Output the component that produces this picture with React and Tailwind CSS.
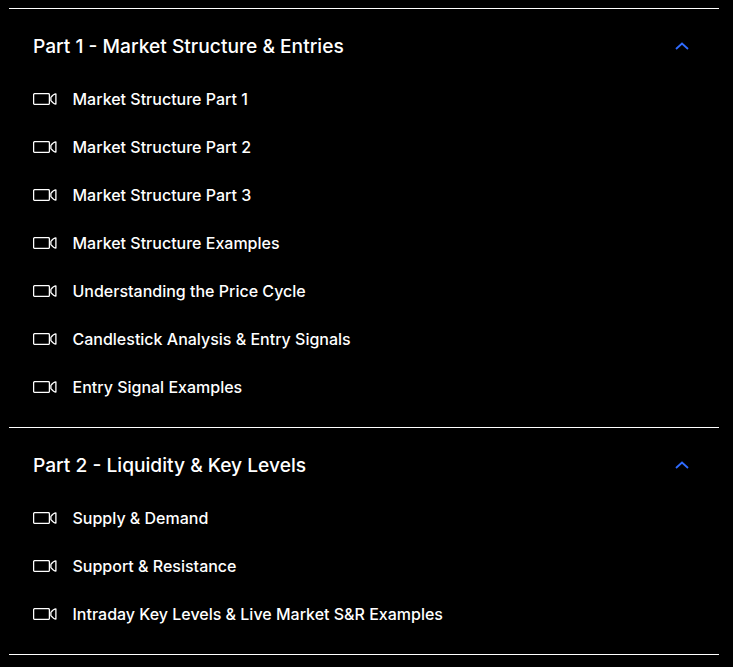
import React from 'react';

const sections = [
  {
    title: 'Part 1 - Market Structure & Entries',
    lessons: [
      'Market Structure Part 1',
      'Market Structure Part 2',
      'Market Structure Part 3',
      'Market Structure Examples',
      'Understanding the Price Cycle',
      'Candlestick Analysis & Entry Signals',
      'Entry Signal Examples',
    ],
  },
  {
    title: 'Part 2 - Liquidity & Key Levels',
    lessons: [
      'Supply & Demand',
      'Support & Resistance',
      'Intraday Key Levels & Live Market S&R Examples',
    ],
  },
];

function VideoIcon() {
  return (
    <svg width="24" height="12" viewBox="0 0 24 12" fill="none" stroke="#fff" strokeWidth="1.3" className="shrink-0">
      <rect x="0.6" y="0.6" width="15.8" height="10.8" rx="1.2" />
      <path d="M22.9 0.9v10.2c-1.8 0-4.2-2.4-5-3.4V4.3c.8-1 3.2-3.4 5-3.4z" strokeLinejoin="round" />
    </svg>
  );
}

function Chevron() {
  return (
    <svg width="14" height="8" viewBox="0 0 14 8" fill="none" stroke="#2f6bff" strokeWidth="1.8" className="mr-[30px]">
      <path d="M1 7L7 1.5 13 7" />
    </svg>
  );
}

export default function App() {
  return (
    <div className="min-h-[667px] bg-black pt-2 pl-[9px] pr-[14px] font-['Inter',sans-serif] text-white">
      {sections.map((section) => (
        <section key={section.title} className="border-t border-white pb-4">
          <div className="flex h-[66px] items-center justify-between pl-6 pt-2">
            <h2 className="text-[19.2px] font-medium leading-7">{section.title}</h2>
            <Chevron />
          </div>
          <ul>
            {section.lessons.map((lesson) => (
              <li key={lesson} className="flex h-12 items-center gap-4 pl-6">
                <VideoIcon />
                <span className="-ml-[0.5px] text-[16px] font-medium">{lesson}</span>
              </li>
            ))}
          </ul>
        </section>
      ))}
      <div className="border-t border-white" />
    </div>
  );
}
